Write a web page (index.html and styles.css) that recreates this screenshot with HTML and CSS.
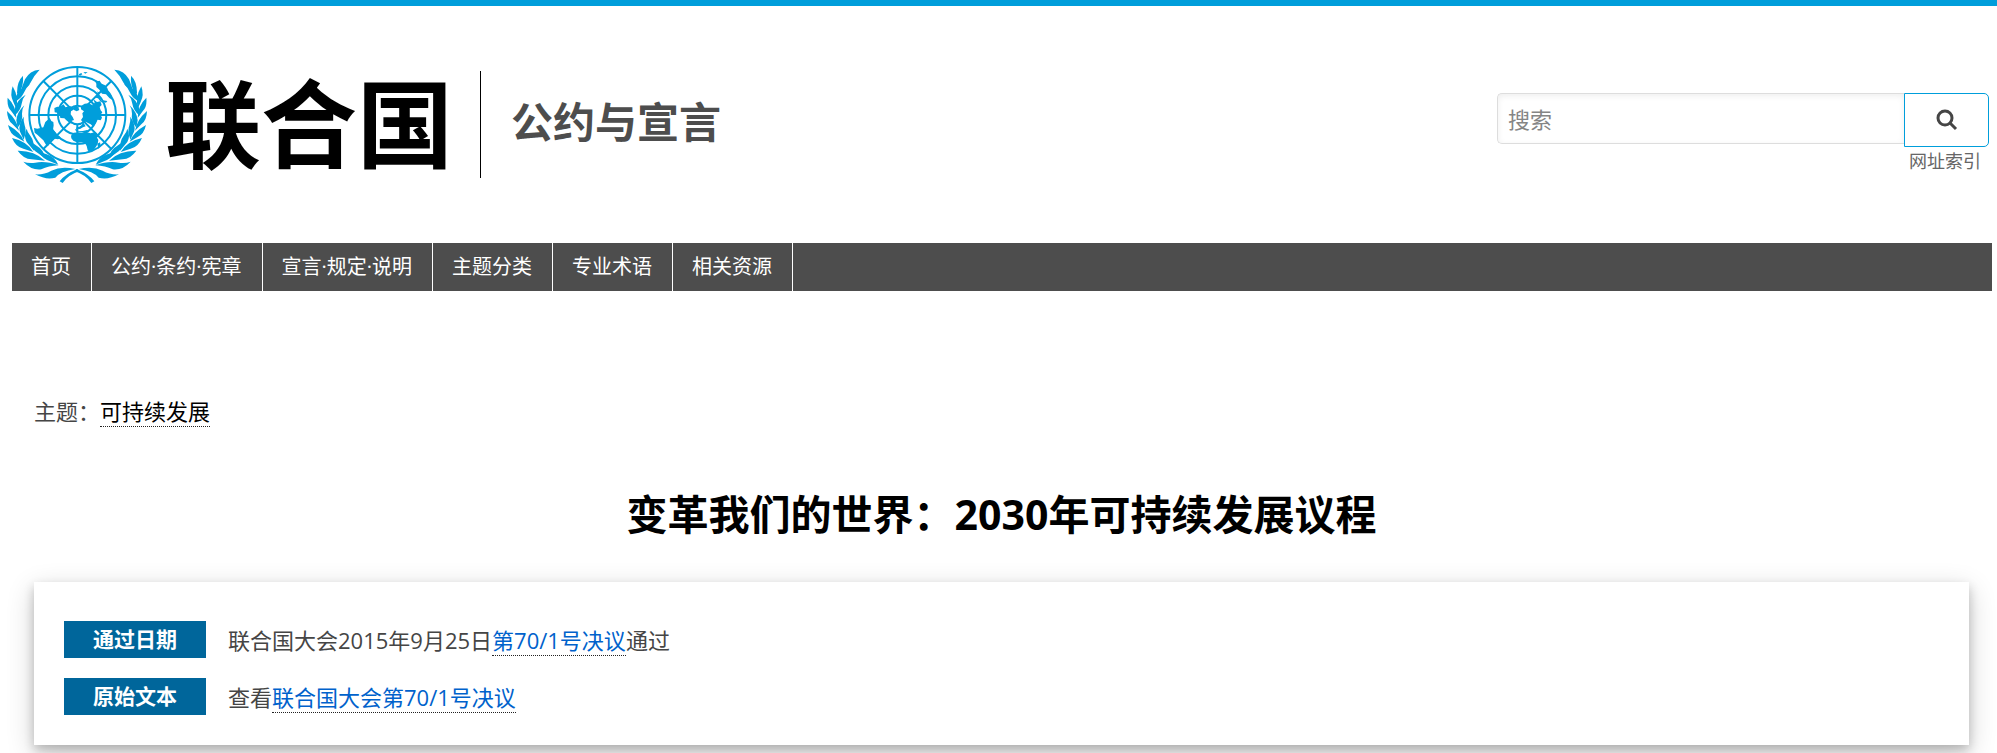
FILE: index.html
```html
<!DOCTYPE html>
<html lang="zh-CN">
<head>
    <meta charset="UTF-8">
    <meta name="viewport" content="width=device-width, initial-scale=1.0">
    <title>变革我们的世界：2030年可持续发展议程</title>
    <link rel="stylesheet" href="styles.css">
</head>
<body>
    <header class="header">
        <a class="logo" href="#">
            <svg class="emblem" viewBox="21 48 420 351" aria-hidden="true">
                <!-- globe grid -->
                <g class="grid">
                    <circle cx="232" cy="195" r="144"/>
                    <circle cx="232" cy="195" r="116"/>
                    <circle cx="232" cy="195" r="87"/>
                    <circle cx="232" cy="195" r="58"/>
                    <circle cx="232" cy="195" r="28"/>
                    <path d="M232 51V167M232 223V339M88 195H204M260 195H376M130 93L212 175M252 215L334 297M130 297L212 215M252 175L334 93"/>
                </g>
                <!-- continents -->
                <g class="land">
                    <path d="M102 234L112 236L130 232L136 216L146 207L149 203L154 213L160 216L161 226L159 239L166 247L171 254L180 260L182 265L174 268L164 266L151 272L146 286L141 289L136 281L130 271L120 262L112 254L104 248Z"/>
                    <path d="M163 174L172 170L180 171L190 163L197 172L208 168L221 171L223 178L213 184L212 193L218 201L222 210L214 213L219 222L209 219L199 211L193 205L181 204L179 193L171 188L164 187Z"/>
                    <path d="M222 171L228 166L235 172L238 180L230 184L222 180Z"/>
                    <path d="M243 168L254 161L266 160L278 166L284 158L280 148L291 156L301 154L305 165L299 171L302 181L307 187L302 194L306 203L302 211L293 209L288 218L278 229L272 223L264 219L257 215L251 219L257 229L249 232L240 237L228 238L230 232L238 230L246 224L248 216L243 210L249 201L247 190L252 184L243 178Z"/>
                    <path d="M213 257L221 248L236 247L247 249L258 246L272 250L283 247L291 250L290 261L295 270L293 282L286 293L279 302L269 307L263 301L260 288L255 280L244 277L233 278L220 272L214 265Z"/>
                    <path d="M283 89L292 94L299 92L304 101L314 105L322 114L325 125L334 135L337 150L328 144L318 133L306 131L298 119L289 111L289 101Z"/>
                    <path d="M292 124L299 129L296 138L304 151L309 160L301 154L294 145L287 143L294 135Z"/>
                    <path d="M309 151L322 153L318 158L310 156ZM292 281L300 277L302 286L295 297ZM236 73L244 69L247 73L240 77ZM250 67L263 66L256 71ZM225 237L232 239L236 244L248 243L261 240L267 244L256 247L240 247L228 244Z"/>
                </g>
                <!-- olive branch, mirrored for the right side -->
                <g id="branch" class="leaves">
                    <path d="M119 59Q89 61 75 88Q70 101 63 120Q84 112 91 99Q101 77 119 59Z"/>
                    <path d="M69 77Q51 94 51 128L54 134Q72 112 69 77Z"/>
                    <path d="M90 102Q64 111 52 131Q44 142 43 156Q63 146 70 131Q77 114 90 102Z"/>
                    <path d="M38 109Q29 135 40 156L48 175Q58 143 38 109Z"/>
                    <path d="M77 134Q50 150 44 177L43 197Q62 182 65 161Q66 147 77 134Z"/>
                    <path d="M23 143Q20 171 34 184L49 204Q49 168 23 143Z"/>
                    <path d="M73 166Q51 187 49 211L53 233Q70 212 66 191Q65 178 73 166Z"/>
                    <path d="M21 183Q22 212 38 223L57 242Q52 210 21 183Z"/>
                    <path d="M71 200Q55 222 59 243L71 269Q81 243 74 226Q70 213 71 200Z"/>
                    <path d="M24 225Q30 252 49 261L73 275Q62 246 24 225Z"/>
                    <path d="M80 236Q70 257 80 276L102 302Q103 272 91 257Q82 247 80 236Z"/>
                    <path d="M36 264Q48 292 70 296L100 306Q80 273 36 264Z"/>
                    <path d="M89 266Q88 288 105 303L137 326Q130 298 111 288Q95 278 89 266Z"/>
                    <path d="M53 302Q71 327 94 328L135 332Q103 301 53 302Z"/>
                    <path d="M113 297Q119 318 141 330L175 344Q162 319 140 313Q121 308 113 297Z"/>
                    <path d="M70 335Q95 362 124 358Q145 348 176 346Q137 332 106 338Q86 341 70 335Z"/>
                    <path d="M105 373Q139 391 166 383Q181 364 226 357Q183 348 154 362Q131 375 105 373Z"/>
                    <path d="M233 357Q196 371 179 394L188 399Q203 375 239 363Z"/>
                </g>
                <use href="#branch" transform="translate(462 0) scale(-1 1)"/>
            </svg>
            <span class="logo-text">联合国</span>
        </a>
        <h2 class="site-name">公约与宣言</h2>
        <div class="search-area">
            <form class="search">
                <input type="search" id="search" placeholder="搜索" aria-label="搜索">
                <button type="button" aria-label="搜索">
                    <svg viewBox="0 0 22 22" aria-hidden="true">
                        <circle cx="9" cy="9" r="7"/>
                        <path d="M14 14L20 20"/>
                    </svg>
                </button>
            </form>
            <a class="site-index" href="#">网址索引</a>
        </div>
    </header>

    <nav class="nav">
        <a href="#">首页</a>
        <a href="#">公约·条约·宪章</a>
        <a href="#">宣言·规定·说明</a>
        <a href="#">主题分类</a>
        <a href="#">专业术语</a>
        <a href="#">相关资源</a>
    </nav>

    <main class="content">
        <p class="topic">主题：<a href="#">可持续发展</a></p>
        <h1>变革我们的世界：2030年可持续发展议程</h1>
        <dl class="card">
            <div class="row">
                <dt>通过日期</dt>
                <dd>联合国大会2015年9月25日<a href="#">第70/1号决议</a>通过</dd>
            </div>
            <div class="row">
                <dt>原始文本</dt>
                <dd>查看<a href="#">联合国大会第70/1号决议</a></dd>
            </div>
        </dl>
    </main>
</body>
</html>
```
FILE: styles.css
```css
* {
    box-sizing: border-box;
}

body {
    margin: 0;
    border-top: 6px solid #009edb;
    font-family: "Open Sans", "Noto Sans CJK SC", sans-serif;
    font-size: 22px;
    line-height: 32px;
    color: #454545;
    background: #fff;
    overflow-x: hidden;
}

.header {
    display: flex;
    align-items: flex-start;
    padding: 60px 8px 60px 7px;
}

.logo {
    display: flex;
    align-items: flex-start;
    padding-right: 27px;
    color: #000;
    text-decoration: none;
}

.emblem {
    width: 140px;
    height: 117px;
}

.grid {
    fill: none;
    stroke: #009edb;
    stroke-width: 6;
}

.land, .leaves {
    fill: #009edb;
}

.logo-text {
    margin-left: 18px;
    font-family: "Noto Sans CJK SC", sans-serif;
    font-size: 96px;
    font-weight: 700;
    line-height: 106px;
}

.site-name {
    margin: 5px 0 0;
    padding: 0 0 10px 30px;
    border-left: 1px solid #000;
    font-family: "Noto Sans CJK SC", sans-serif;
    font-size: 42px;
    line-height: 97px;
    color: #4d4d4d;
}

.search-area {
    width: 492px;
    margin: 27px 0 0 auto;
    text-align: right;
}

.search {
    display: flex;
    align-items: flex-start;
}

.search input {
    flex: 1;
    min-width: 0;
    height: 51px;
    padding: 0 10px;
    border: 1px solid #ddd;
    border-right: none;
    border-radius: 5px 0 0 5px;
    box-shadow: inset 0 2px 6px rgba(0, 0, 0, 0.07);
    font-family: inherit;
    font-size: 22px;
    color: #454545;
    background: #fff;
}

.search input::placeholder {
    color: #858585;
}

.search button {
    width: 85px;
    height: 54px;
    padding: 0;
    border: 1px solid #009edb;
    border-radius: 0 5px 5px 0;
    background: #fff;
    cursor: pointer;
}

.search svg {
    display: block;
    width: 22px;
    height: 22px;
    margin: 0 auto;
    fill: none;
    stroke: #454545;
    stroke-width: 3;
}

.site-index {
    display: block;
    padding-right: 8px;
    font-size: 18px;
    line-height: 28px;
    color: #666;
    text-decoration: none;
}

.nav {
    display: flex;
    margin: 0 5px 0 12px;
    background: #4d4d4d;
}

.nav a {
    padding: 0 20px 0 19px;
    border-right: 1px solid #fff;
    font-size: 20px;
    line-height: 48px;
    color: #fff;
    text-decoration: none;
}

.content {
    padding: 104px 28px 8px 34px;
}

.topic {
    margin: 0;
}

.topic a, .card a {
    border-bottom: 1px dotted #222;
    text-decoration: none;
}

.topic a {
    color: #000;
}

h1 {
    margin: 55px 0 36px;
    font-size: 41px;
    line-height: 64px;
    font-weight: 700;
    text-align: center;
    color: #000;
}

.card {
    margin: 0;
    padding: 39px 30px 30px;
    background: #fff;
    box-shadow: 0 5px 10px rgba(0, 0, 0, 0.2), 0 8px 26px rgba(0, 0, 0, 0.19);
}

.row {
    display: flex;
    align-items: center;
    gap: 22px;
}

.row + .row {
    margin-top: 20px;
}

.row dt {
    width: 142px;
    font-size: 21px;
    font-weight: 700;
    line-height: 37px;
    text-align: center;
    color: #fff;
    background: #00669b;
}

.row dd {
    margin: 0;
}

.card a {
    color: #0062cc;
}
```
